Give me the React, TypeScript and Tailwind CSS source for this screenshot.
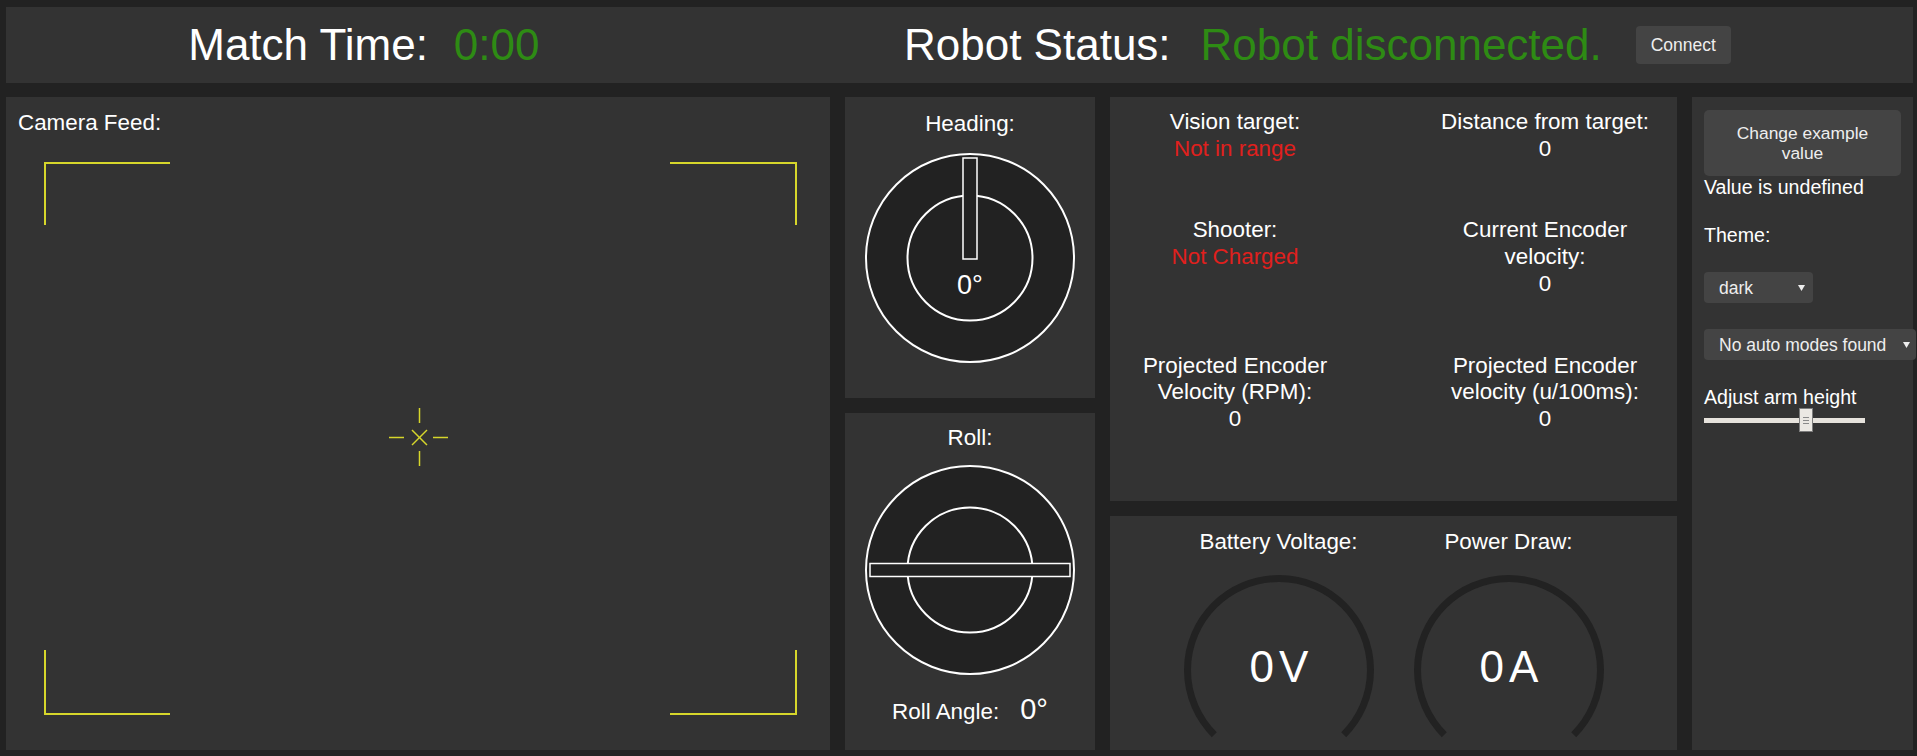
import React from "react";

const GREEN = "text-[#2e8b14]";

interface Reading {
  label: string;
  value: string;
  warn?: boolean;
}

const readings: Reading[] = [
  { label: "Vision target:", value: "Not in range", warn: true },
  { label: "Distance from target:", value: "0" },
  { label: "Shooter:", value: "Not Charged", warn: true },
  { label: "Current Encoder velocity:", value: "0" },
  { label: "Projected Encoder Velocity (RPM):", value: "0" },
  { label: "Projected Encoder velocity (u/100ms):", value: "0" },
];

function CameraFrame() {
  // brackets + crosshair drawn over the (empty) feed
  const y = "#d6d62b";
  return (
    <svg width="753" height="553" viewBox="0 0 753 553" className="ml-[38px] mt-[27px] block">
      <g fill="none" stroke={y} strokeWidth="2">
        <path d="M1 63 V1 H126" />
        <path d="M626 1 H752 V63" />
        <path d="M1 488 V552 H126" />
        <path d="M626 552 H752 V488" />
      </g>
      <g stroke={y} strokeWidth="1.5">
        <line x1="375.5" y1="246" x2="375.5" y2="261" />
        <line x1="375.5" y1="289" x2="375.5" y2="304" />
        <line x1="345" y1="275.5" x2="360" y2="275.5" />
        <line x1="389" y1="275.5" x2="404" y2="275.5" />
        <line x1="368" y1="268" x2="383" y2="283" />
        <line x1="383" y1="268" x2="368" y2="283" />
      </g>
    </svg>
  );
}

function HeadingDial() {
  return (
    <svg width="212" height="212" viewBox="-106 -106 212 212" className="mt-[16px] block">
      <circle r="104" fill="#222" stroke="#fff" strokeWidth="2" />
      <circle r="62.5" fill="#222" stroke="#fff" strokeWidth="2" />
      <rect x="-7" y="-100" width="14" height="101" fill="#222" stroke="#fff" strokeWidth="1.5" />
      <text
        x="0"
        y="36"
        textAnchor="middle"
        fill="#fff"
        fontSize="27"
        fontFamily="'Liberation Sans', Arial, sans-serif"
      >
        0°
      </text>
    </svg>
  );
}

function RollDial() {
  return (
    <svg width="212" height="212" viewBox="-106 -106 212 212" className="mt-[14px] block">
      <circle r="104" fill="#222" stroke="#fff" strokeWidth="2" />
      <circle r="62.5" fill="#222" stroke="#fff" strokeWidth="2" />
      <rect x="-100" y="-6.5" width="200" height="13" fill="#222" stroke="#fff" strokeWidth="1.5" />
    </svg>
  );
}

function Gauge({ title, value }: { title: string; value: string }) {
  return (
    <div className="w-[230px] flex flex-col items-center">
      <div>{title}</div>
      <svg width="200" height="172" viewBox="0 0 200 172" className="mt-[16px] block">
        <path
          d="M35.3 164.7 A91.5 91.5 0 1 1 164.7 164.7"
          fill="none"
          stroke="#222"
          strokeWidth="7"
        />
        <text
          x="102.5"
          y="111.5"
          textAnchor="middle"
          fill="#fff"
          fontSize="44"
          letterSpacing="5"
          fontFamily="'Liberation Sans', Arial, sans-serif"
        >
          {value}
        </text>
      </svg>
    </div>
  );
}

function Caret() {
  return (
    <svg width="7" height="6" viewBox="0 0 7 6">
      <path d="M0 0 H7 L3.5 6 Z" fill="#eee" />
    </svg>
  );
}

export default function App() {
  return (
    <div className="w-[1917px] h-[756px] overflow-hidden bg-[#222] pt-[7px] pl-[6px] text-white font-['Liberation_Sans',Arial,sans-serif]">
      <header className="w-[1907px] h-[76px] bg-[#333] flex items-center justify-around">
        <div className="flex items-baseline text-[44px] leading-none">
          <span>Match Time:</span>
          <span className={`ml-[26px] ${GREEN}`}>0:00</span>
        </div>
        <div className="flex items-center">
          <div className="flex items-baseline text-[44px] leading-none">
            <span>Robot Status:</span>
            <span className={`ml-[30px] ${GREEN}`}>Robot disconnected.</span>
          </div>
          <button className="ml-[34px] h-[38px] w-[95px] rounded-[4px] bg-[#444] text-[17.5px] text-[#eee]">
            Connect
          </button>
        </div>
      </header>

      <div className="mt-[14px] h-[653px] flex gap-[15px] text-[22.4px] leading-[25px]">
        {/* camera */}
        <section className="w-[824px] bg-[#333] pt-[13px]">
          <div className="pl-[12px]">Camera Feed:</div>
          <CameraFrame />
        </section>

        {/* heading + roll */}
        <div className="w-[250px] flex flex-col gap-[15px]">
          <section className="h-[301px] bg-[#333] pt-[14px] flex flex-col items-center">
            <div>Heading:</div>
            <HeadingDial />
          </section>
          <section className="flex-1 bg-[#333] pt-[12px] flex flex-col items-center">
            <div>Roll:</div>
            <RollDial />
            <div className="mt-[17px] flex items-baseline gap-[21px]">
              <span>Roll Angle:</span>
              <span className="text-[29px] leading-[32px]">0°</span>
            </div>
          </section>
        </div>

        {/* readouts */}
        <div className="w-[567px] flex flex-col gap-[15px]">
          <section className="h-[404px] bg-[#333] pt-[12px] grid grid-cols-[250px_264px] gap-x-[53px] gap-y-[55px] content-start text-center leading-[26.7px]">
            {readings.map((r) => (
              <div key={r.label} className="flex flex-col items-center">
                <div className={r.label.length > 22 ? "w-[230px]" : ""}>{r.label}</div>
                <div className={r.warn ? "text-[#e0201d]" : ""}>{r.value}</div>
              </div>
            ))}
          </section>
          <section className="flex-1 bg-[#333] pt-[13px] flex justify-center">
            <Gauge title="Battery Voltage:" value="0V" />
            <Gauge title="Power Draw:" value="0A" />
          </section>
        </div>

        {/* controls */}
        <section className="w-[221px] bg-[#333] px-[12px] pt-[13px] text-[19.6px] leading-[22px]">
          <button className="w-full rounded-[5px] bg-[#444] py-[13px] text-[17.4px] leading-[20px] text-[#eee]">
            Change example
            <br />
            value
          </button>
          <div>Value is undefined</div>
          <div className="mt-[26px] flex flex-col gap-[26px]">
            <div>Theme:</div>
            <div className="w-[109px] h-[31px] rounded-[4px] bg-[#444] flex items-center justify-between pl-[15px] pr-[8px] text-[17.5px] text-[#eee]">
              <span>dark</span>
              <Caret />
            </div>
            <div className="w-[212px] h-[31px] rounded-[4px] bg-[#444] flex items-center justify-between pl-[15px] pr-[6px] text-[17.5px] text-[#eee]">
              <span>No auto modes found</span>
              <Caret />
            </div>
            <div>
              <div>Adjust arm height</div>
              <div className="relative h-[24px] w-[161px]">
                <div className="absolute left-0 right-0 top-[10px] h-[5px] bg-[#e6e2dc]" />
                <div className="absolute left-[95px] top-0 h-[24px] w-[14px] bg-[#ebe8e3] border border-[#7c7c7c] flex flex-col items-center justify-center gap-[2px]">
                  <div className="h-px w-[6px] bg-[#8a8a8a]" />
                  <div className="h-px w-[6px] bg-[#8a8a8a]" />
                  <div className="h-px w-[6px] bg-[#8a8a8a]" />
                </div>
              </div>
            </div>
          </div>
        </section>
      </div>
    </div>
  );
}
